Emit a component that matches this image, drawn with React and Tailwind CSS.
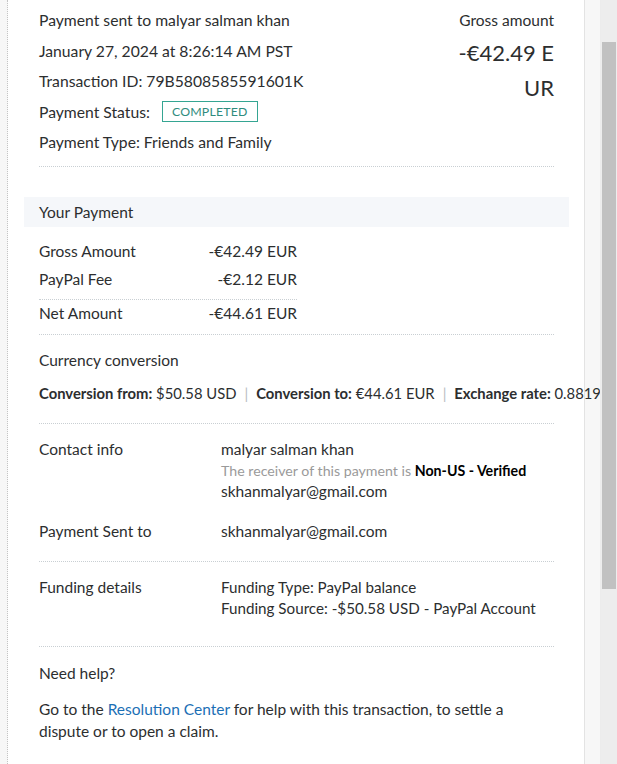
import React from 'react';

const font = { fontFamily: 'Lato, "Open Sans", sans-serif' };

const Divider = ({ className = '' }) => (
  <div className={`border-t border-dotted border-[#c9cfd3] ${className}`} />
);

const App = () => {
  return (
    <div className="flex w-full h-[764px] bg-[#f7f7f7] text-[#2c2e2f] overflow-hidden" style={font}>
      {/* left gutter */}
      <div className="w-[8px] shrink-0 border-r border-dotted border-[#c4c4c4]" />

      {/* main panel */}
      <div className="w-[577px] shrink-0 bg-white border-r border-[#e3e3e3] pl-[31px] pr-[30px] text-[15.5px]">
        {/* header */}
        <div className="flex justify-between pt-[5px]">
          <div className="leading-[30.5px] text-[15.7px]">
            <div>Payment sent to malyar salman khan</div>
            <div>January 27, 2024 at 8:26:14 AM PST</div>
            <div>Transaction ID: 79B5808585591601K</div>
            <div className="flex items-center">
              <span>Payment Status:</span>
              <span className="ml-[12px] border border-[#35a592] text-[#2f8c7e] text-[12.3px] leading-[19px] px-[9px] tracking-[0.2px]">
                COMPLETED
              </span>
            </div>
            <div>Payment Type: Friends and Family</div>
          </div>
          <div className="text-right">
            <div className="leading-[30px]">Gross amount</div>
            <div className="w-[100px] ml-auto text-[22px] leading-[35px] break-all">-€42.49 EUR</div>
          </div>
        </div>
        <Divider className="mt-[8px]" />

        {/* your payment */}
        <div className="-mx-[15px] mt-[30px] bg-[#f5f7fa] px-[15px] h-[30px] leading-[30px]">Your Payment</div>
        <div className="w-[258px] mt-[10px]">
          <div className="flex justify-between leading-[28px]">
            <span>Gross Amount</span>
            <span>-€42.49 EUR</span>
          </div>
          <div className="flex justify-between leading-[28px] pb-[6px] border-b border-dotted border-[#c9cfd3]">
            <span>PayPal Fee</span>
            <span>-€2.12 EUR</span>
          </div>
          <div className="flex justify-between leading-[26px] pb-[8px]">
            <span>Net Amount</span>
            <span>-€44.61 EUR</span>
          </div>
        </div>
        <Divider />

        {/* currency conversion */}
        <div className="mt-[12px] leading-[26px]">Currency conversion</div>
        <div className="mt-[7px] leading-[26px] whitespace-nowrap text-[14.8px]">
          <span className="font-bold">Conversion from:</span> $50.58 USD
          <span className="text-[#b8bcbf] mx-[8px]">|</span>
          <span className="font-bold">Conversion to:</span> €44.61 EUR
          <span className="text-[#b8bcbf] mx-[8px]">|</span>
          <span className="font-bold">Exchange rate:</span> 0.8819
        </div>
        <Divider className="mt-[17px]" />

        {/* contact */}
        <div className="flex mt-[15px] leading-[21px]">
          <div className="w-[182px] shrink-0">Contact info</div>
          <div>
            <div>malyar salman khan</div>
            <div className="text-[14.2px] text-[#9a9a9a]">
              The receiver of this payment is <span className="font-bold text-black">Non-US - Verified</span>
            </div>
            <div>skhanmalyar@gmail.com</div>
          </div>
        </div>
        <div className="flex mt-[19px] leading-[21px]">
          <div className="w-[182px] shrink-0">Payment Sent to</div>
          <div>skhanmalyar@gmail.com</div>
        </div>
        <Divider className="mt-[19px]" />

        {/* funding */}
        <div className="flex mt-[15px] leading-[21px]">
          <div className="w-[182px] shrink-0">Funding details</div>
          <div className="text-[15.2px]">
            <div>Funding Type: PayPal balance</div>
            <div>Funding Source: -$50.58 USD - PayPal Account</div>
          </div>
        </div>
        <Divider className="mt-[27px]" />

        {/* help */}
        <div className="mt-[16px] leading-[21px]">Need help?</div>
        <div className="mt-[14px] leading-[22px]">
          <div>
            Go to the <span className="text-[#1b6fb5]">Resolution Center</span> for help with this transaction, to settle a
          </div>
          <div>dispute or to open a claim.</div>
        </div>
      </div>

      {/* right gutter */}
      <div className="w-[16px] shrink-0 border-r border-[#ececec]" />

      {/* scrollbar */}
      <div className="flex-1 bg-[#ededed] px-[1px]">
        <div className="mt-[42px] h-[547px] bg-[#c1c1c1]" />
      </div>
    </div>
  );
};

export default App;
